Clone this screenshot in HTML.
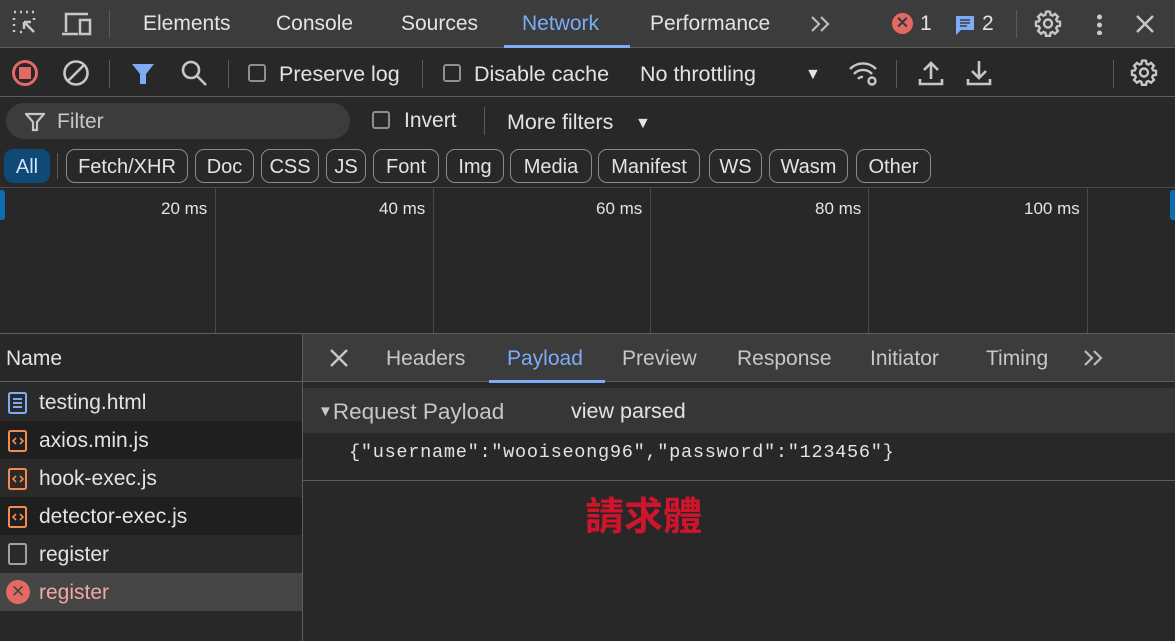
<!DOCTYPE html><html><head><meta charset="utf-8"><style>
*{margin:0;padding:0;box-sizing:border-box}
body{width:1175px;height:641px;background:#282828;font-family:"Liberation Sans","Noto Sans CJK TC",sans-serif;color:#e3e3e3;position:relative;overflow:hidden;font-size:21px}
.a{position:absolute;white-space:nowrap}
.cb{position:absolute;width:18px;height:18px;border:2px solid #8e8e8e;border-radius:3px}
.chip{position:absolute;top:149px;height:34px;border:1px solid #8a8a8a;border-radius:9px;font-size:20px;line-height:34px;text-align:center}
.vl{position:absolute;width:1px;background:#5a5a5a}
</style></head><body>
<svg width="0" height="0" style="position:absolute"><defs><g id="gear" fill="none" stroke="#c7c7c7" stroke-width="2.4"><path d="M12 1.5l2 .3.6 3 1.9.8 2.5-1.7 2.9 2.9-1.7 2.5.8 1.9 3 .6v4l-3 .6-.8 1.9 1.7 2.5-2.9 2.9-2.5-1.7-1.9.8-.6 3h-4l-.6-3-1.9-.8-2.5 1.7-2.9-2.9 1.7-2.5-.8-1.9-3-.6v-4l3-.6.8-1.9-1.7-2.5 2.9-2.9 2.5 1.7 1.9-.8.6-3z" transform="translate(2 0)"/><circle cx="14" cy="13.5" r="4"/></g><g id="chev" fill="none" stroke="#bbb" stroke-width="2.2"><path d="M2 3l7 7-7 7M11 3l7 7-7 7"/></g></defs></svg>
<!-- top bar -->
<div class="a" style="left:0;top:0;width:1175px;height:48px;background:#3c3c3c;border-bottom:1px solid #5e5e5e"></div>
<svg class="a" style="left:12px;top:10px" width="28" height="28" viewBox="0 0 28 28" fill="none" stroke="#c7c7c7" stroke-width="2.5"><path d="M2 2h2M8 2h2M14 2h2M20 2h2M2 8v2M2 14v2M2 20v2M22 8v2M8 22h2" /><path d="M12 12l10 10M12 12v7M12 12h7"/></svg>
<svg class="a" style="left:60px;top:10px" width="34" height="28" viewBox="0 0 34 28" fill="none" stroke="#c7c7c7" stroke-width="2.5"><path d="M6 22V4h22M2 24h16"/><rect x="20" y="10" width="10" height="14"/></svg>
<div class="vl" style="left:109px;top:10px;height:28px"></div>
<div class="a" style="left:143px;top:12px">Elements</div>
<div class="a" style="left:276px;top:12px">Console</div>
<div class="a" style="left:401px;top:12px">Sources</div>
<div class="a" style="left:522px;top:12px;color:#7cacf8">Network</div>
<div class="a" style="left:504px;top:45px;width:126px;height:3px;background:#7cacf8"></div>
<div class="a" style="left:650px;top:12px">Performance</div>
<svg class="a" style="left:809px;top:14px" width="22" height="20" viewBox="0 0 20 20"><use href="#chev"/></svg>
<div class="a" style="left:892px;top:13px;width:21px;height:21px;border-radius:50%;background:#e46962;color:#3c3c3c;font-size:16px;line-height:21px;text-align:center;font-weight:bold">✕</div>
<div class="a" style="left:920px;top:12px">1</div>
<svg class="a" style="left:954px;top:14px" width="22" height="22" viewBox="0 0 22 22"><path d="M2 2h18v14H7l-5 5z" fill="#7cacf8"/><path d="M6 6h10M6 9h10M6 12h7" stroke="#3c3c3c" stroke-width="1.6"/></svg>
<div class="a" style="left:982px;top:12px">2</div>
<div class="vl" style="left:1016px;top:10px;height:28px"></div>
<svg class="a" style="left:1034px;top:10px" width="28" height="28" viewBox="0 0 28 28"><use href="#gear"/></svg>
<div class="a" style="left:1097px;top:13px;width:5px;height:22px;background:radial-gradient(circle,#c7c7c7 2.4px,transparent 2.6px) 0 0/5px 8px"></div>
<svg class="a" style="left:1135px;top:14px" width="20" height="20" viewBox="0 0 20 20" stroke="#c7c7c7" stroke-width="2.4"><path d="M2 2l16 16M18 2L2 18"/></svg>
<!-- toolbar -->
<div class="a" style="left:0;top:96px;width:1175px;height:1px;background:#5e5e5e"></div>
<div class="a" style="left:12px;top:60px;width:26px;height:26px;border:3px solid #e46962;border-radius:50%"></div>
<div class="a" style="left:19px;top:67px;width:12px;height:12px;background:#e46962"></div>
<svg class="a" style="left:62px;top:59px" width="28" height="28" viewBox="0 0 28 28" fill="none" stroke="#c7c7c7" stroke-width="2.6"><circle cx="14" cy="14" r="11.5"/><path d="M6 22L22 6"/></svg>
<div class="vl" style="left:109px;top:60px;height:28px"></div>
<svg class="a" style="left:131px;top:62px" width="24" height="24" viewBox="0 0 24 24"><path d="M1 2h22l-8 10v10h-6V12z" fill="#7cacf8"/></svg>
<svg class="a" style="left:180px;top:59px" width="28" height="28" viewBox="0 0 28 28" fill="none" stroke="#c7c7c7" stroke-width="2.6"><circle cx="11" cy="11" r="8"/><path d="M17 17l9 9"/></svg>
<div class="vl" style="left:228px;top:60px;height:28px"></div>
<div class="cb" style="left:248px;top:64px"></div>
<div class="a" style="left:279px;top:62px;font-size:21.5px">Preserve log</div>
<div class="vl" style="left:422px;top:60px;height:28px"></div>
<div class="cb" style="left:443px;top:64px"></div>
<div class="a" style="left:474px;top:62px;font-size:21.5px">Disable cache</div>
<div class="a" style="left:640px;top:62px;font-size:21.5px">No throttling</div>
<div class="a" style="left:805px;top:66px;font-size:16px">▼</div>
<svg class="a" style="left:848px;top:59px" width="32" height="28" viewBox="0 0 32 28" fill="none" stroke="#c7c7c7" stroke-width="2.4"><path d="M2 10a18 18 0 0 1 26 0M6 15a12 12 0 0 1 18 0M10 20a6 6 0 0 1 5-2"/><circle cx="24" cy="22" r="3.5"/></svg>
<div class="vl" style="left:896px;top:60px;height:28px"></div>
<svg class="a" style="left:918px;top:59px" width="26" height="28" viewBox="0 0 26 28" fill="none" stroke="#c7c7c7" stroke-width="2.6"><path d="M13 20V4M6 11l7-7 7 7M2 20v5h22v-5"/></svg>
<svg class="a" style="left:966px;top:59px" width="26" height="28" viewBox="0 0 26 28" fill="none" stroke="#c7c7c7" stroke-width="2.6"><path d="M13 2v17M6 12l7 7 7-7M2 20v5h22v-5"/></svg>
<div class="vl" style="left:1113px;top:60px;height:28px"></div>
<svg class="a" style="left:1130px;top:59px" width="28" height="28" viewBox="0 0 28 28"><use href="#gear"/></svg>
<!-- filter row -->
<div class="a" style="left:6px;top:103px;width:344px;height:36px;border-radius:18px;background:#3c3c3c"></div>
<svg class="a" style="left:25px;top:112px" width="20" height="20" viewBox="0 0 20 20" fill="none" stroke="#c7c7c7" stroke-width="2.2"><path d="M1 2h18l-7 8v8h-4v-8z"/></svg>
<div class="a" style="left:57px;top:110px;color:#c7c7c7">Filter</div>
<div class="cb" style="left:372px;top:111px"></div>
<div class="a" style="left:404px;top:109px">Invert</div>
<div class="vl" style="left:484px;top:107px;height:28px"></div>
<div class="a" style="left:507px;top:110px;font-size:21.5px">More filters</div>
<div class="a" style="left:635px;top:115px;font-size:16px">▼</div>
<!-- chips -->
<div class="chip" style="left:4px;width:46px;background:#0e4a75;border-color:#0e4a75;color:#cfe3ff">All</div>
<div class="vl" style="left:57px;top:153px;height:26px"></div>
<div class="chip" style="left:66px;width:122px">Fetch/XHR</div>
<div class="chip" style="left:195px;width:59px">Doc</div>
<div class="chip" style="left:261px;width:58px">CSS</div>
<div class="chip" style="left:326px;width:40px">JS</div>
<div class="chip" style="left:373px;width:66px">Font</div>
<div class="chip" style="left:446px;width:58px">Img</div>
<div class="chip" style="left:510px;width:82px">Media</div>
<div class="chip" style="left:598px;width:102px">Manifest</div>
<div class="chip" style="left:709px;width:53px">WS</div>
<div class="chip" style="left:769px;width:79px">Wasm</div>
<div class="chip" style="left:856px;width:75px">Other</div>
<!-- timeline -->
<div class="a" style="left:0;top:187px;width:1175px;height:1px;background:#4a4a4a"></div>
<div class="a" style="left:0;top:190px;width:5px;height:30px;background:#0e6cb0;border-radius:0 3px 3px 0"></div>
<div class="a" style="left:1170px;top:190px;width:5px;height:30px;background:#0e6cb0;border-radius:3px 0 0 3px"></div>
<div class="vl" style="left:215px;top:188px;height:145px;background:#4a4a4a"></div>
<div class="vl" style="left:433px;top:188px;height:145px;background:#4a4a4a"></div>
<div class="vl" style="left:650px;top:188px;height:145px;background:#4a4a4a"></div>
<div class="vl" style="left:868px;top:188px;height:145px;background:#4a4a4a"></div>
<div class="vl" style="left:1087px;top:188px;height:145px;background:#4a4a4a"></div>
<div class="a" style="left:161px;top:199px;font-size:17px">20 ms</div>
<div class="a" style="left:379px;top:199px;font-size:17px">40 ms</div>
<div class="a" style="left:596px;top:199px;font-size:17px">60 ms</div>
<div class="a" style="left:815px;top:199px;font-size:17px">80 ms</div>
<div class="a" style="left:1024px;top:199px;font-size:17px">100 ms</div>
<!-- bottom -->
<div class="a" style="left:0;top:333px;width:1175px;height:1px;background:#5e5e5e"></div>
<div class="a" style="left:0;top:334px;width:302px;height:48px;background:#282828;border-bottom:1px solid #5e5e5e"></div>
<div class="a" style="left:6px;top:347px">Name</div>
<div class="a" style="left:0;top:383px;width:302px;height:38px;background:#2a2a2a"></div>
<div class="a" style="left:0;top:421px;width:302px;height:38px;background:#1f1f1f"></div>
<div class="a" style="left:0;top:459px;width:302px;height:38px;background:#2a2a2a"></div>
<div class="a" style="left:0;top:497px;width:302px;height:38px;background:#1f1f1f"></div>
<div class="a" style="left:0;top:535px;width:302px;height:38px;background:#2a2a2a"></div>
<div class="a" style="left:0;top:573px;width:302px;height:38px;background:#454545"></div>
<div class="a" style="left:0;top:611px;width:302px;height:30px;background:#282828"></div>
<svg class="a" style="left:8px;top:392px" width="20" height="22" viewBox="0 0 20 22" fill="none" stroke="#7cacf8" stroke-width="2"><rect x="1" y="1" width="17" height="20" rx="1.5"/><path d="M5 7h9M5 11h9M5 15h9"/></svg>
<div class="a" style="left:39px;top:391px">testing.html</div>
<svg class="a" style="left:8px;top:430px" width="20" height="22" viewBox="0 0 20 22" fill="none" stroke="#f28b50" stroke-width="2"><rect x="1" y="1" width="17" height="20" rx="1.5"/><path d="M8 8l-3 3 3 3M12 8l3 3-3 3" stroke-width="1.6"/></svg>
<div class="a" style="left:39px;top:429px">axios.min.js</div>
<svg class="a" style="left:8px;top:468px" width="20" height="22" viewBox="0 0 20 22" fill="none" stroke="#f28b50" stroke-width="2"><rect x="1" y="1" width="17" height="20" rx="1.5"/><path d="M8 8l-3 3 3 3M12 8l3 3-3 3" stroke-width="1.6"/></svg>
<div class="a" style="left:39px;top:467px">hook-exec.js</div>
<svg class="a" style="left:8px;top:506px" width="20" height="22" viewBox="0 0 20 22" fill="none" stroke="#f28b50" stroke-width="2"><rect x="1" y="1" width="17" height="20" rx="1.5"/><path d="M8 8l-3 3 3 3M12 8l3 3-3 3" stroke-width="1.6"/></svg>
<div class="a" style="left:39px;top:505px">detector-exec.js</div>
<svg class="a" style="left:8px;top:543px" width="20" height="22" viewBox="0 0 20 22" fill="none" stroke="#a0a0a0" stroke-width="2"><rect x="1" y="1" width="17" height="20" rx="1.5"/></svg>
<div class="a" style="left:39px;top:543px">register</div>
<div class="a" style="left:6px;top:580px;width:24px;height:24px;border-radius:50%;background:#e46962;color:#454545;font-size:17px;line-height:24px;text-align:center">✕</div>
<div class="a" style="left:39px;top:581px;color:#f2a8a3">register</div>
<div class="a" style="left:302px;top:334px;width:1px;height:307px;background:#5e5e5e"></div>
<!-- right panel -->
<div class="a" style="left:303px;top:334px;width:872px;height:48px;background:#3c3c3c;border-bottom:1px solid #5e5e5e"></div>
<svg class="a" style="left:329px;top:348px" width="20" height="20" viewBox="0 0 20 20" stroke="#c7c7c7" stroke-width="2.4"><path d="M2 2l16 16M18 2L2 18"/></svg>
<div class="a" style="left:386px;top:347px;color:#c7c7c7">Headers</div>
<div class="a" style="left:507px;top:347px;color:#7cacf8">Payload</div>
<div class="a" style="left:489px;top:380px;width:116px;height:3px;background:#7cacf8"></div>
<div class="a" style="left:622px;top:347px;color:#c7c7c7">Preview</div>
<div class="a" style="left:737px;top:347px;color:#c7c7c7">Response</div>
<div class="a" style="left:870px;top:347px;color:#c7c7c7">Initiator</div>
<div class="a" style="left:986px;top:347px;color:#c7c7c7">Timing</div>
<svg class="a" style="left:1082px;top:348px" width="22" height="20" viewBox="0 0 20 20"><use href="#chev"/></svg>
<div class="a" style="left:303px;top:388px;width:872px;height:45px;background:#363636"></div>
<div class="a" style="left:318px;top:399px;font-size:22.5px;color:#c7c7c7"><span style="font-size:15px;vertical-align:3px">▼</span>Request Payload</div>
<div class="a" style="left:571px;top:399px;font-size:21.5px">view parsed</div>
<div class="a" style="left:349px;top:442px;font-family:'Liberation Mono',monospace;font-size:18.6px;letter-spacing:0.7px">{"username":"wooiseong96","password":"123456"}</div>
<div class="a" style="left:303px;top:480px;width:872px;height:1px;background:#5e5e5e"></div>
<div class="a" style="left:585px;top:486px;font-size:39px;font-weight:bold;color:#d0142c;font-family:'Noto Sans CJK TC','Liberation Sans',sans-serif">請求體</div>
</body></html>
